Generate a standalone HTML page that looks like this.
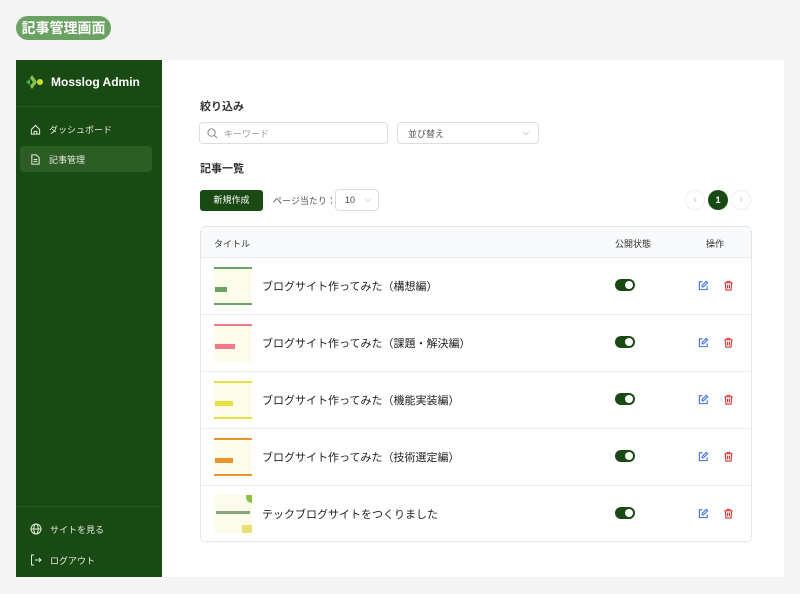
<!DOCTYPE html>
<html><head><meta charset="utf-8"><style>
*{box-sizing:border-box;margin:0;padding:0}
body{width:800px;height:594px;background:#f4f4f4;font-family:"Liberation Sans","Noto Sans CJK JP",sans-serif;position:relative;overflow:hidden;color:#222}
.badge{position:absolute;left:16px;top:16px;width:95px;height:24px;border-radius:12px;background:#6aa262;color:#fff;font-weight:bold;font-size:14px;line-height:24px;text-align:center}
.side{position:absolute;left:16px;top:60px;width:146px;height:517px;background:#1a4a14}
.main{position:absolute;left:162px;top:60px;width:622px;height:517px;background:#fff}
.logo{position:absolute;left:10px;top:14px;color:#fff;font-weight:bold;font-size:12px;display:flex;align-items:center;gap:7px}
.sep{position:absolute;left:0;right:0;height:1px;background:#2a5a22}
.nav{position:absolute;left:4px;width:132px;height:26px;border-radius:4px;color:#e4ecdf;font-size:9px;display:flex;align-items:center;padding-left:10px;gap:8px}
.abs{position:absolute}
.h{font-size:11px;font-weight:bold;color:#333}
.input{border:1px solid #ddd;border-radius:4px;height:22px;font-size:9px;color:#999;display:flex;align-items:center}
.tbl{position:absolute;left:200px;top:226px;width:552px;height:316px;border:1px solid #e6e6e6;border-radius:5px;overflow:hidden;background:#fff}
.row{position:absolute;left:0;right:0;height:57px;border-top:1px solid #ececec}
.thumb{position:absolute;left:13px;top:9px;width:38px;height:38px;background:#fdfbea}
.ttl{position:absolute;left:61px;top:20px;font-size:11px;color:#222}
.tog{position:absolute;left:414px;top:21px;width:20px;height:12px;border-radius:6px;background:#1a4a14}
.tog:after{content:"";position:absolute;right:2px;top:2px;width:8px;height:8px;border-radius:50%;background:#fff}
.ed{position:absolute;left:497px;top:22px}
.dl{position:absolute;left:522px;top:22px}
</style></head><body>
<div class="badge">記事管理画面</div>
<div class="side">
 <div class="logo"><svg width="18" height="16" viewBox="0 0 18 16"><path d="M6 1l5 7-5 7-2-3 3-4-3-4z" fill="#8bc34a"/><path d="M0 8l4-3 0 6z" fill="#4caf50"/><circle cx="14" cy="8" r="3" fill="#cddc39"/></svg>Mosslog Admin</div>
 <div class="sep" style="top:46px"></div>
 <div class="nav" style="top:56px"><svg width="11" height="11" viewBox="0 0 12 12" fill="none" stroke="#e4ecdf" stroke-width="1.1"><path d="M1.5 6L6 1.5 10.5 6V11h-9z"/><path d="M4.5 11V8h3v3"/></svg>ダッシュボード</div>
 <div class="nav" style="top:86px;background:#2c5d25"><svg width="11" height="11" viewBox="0 0 12 12" fill="none" stroke="#e4ecdf" stroke-width="1.1"><path d="M2 1h5l3 3v7H2z"/><path d="M4 6h4M4 8h4"/></svg>記事管理</div>
 <div class="sep" style="top:446px"></div>
 <div class="nav" style="top:456px"><svg width="12" height="12" viewBox="0 0 12 12" fill="none" stroke="#e4ecdf" stroke-width="1"><circle cx="6" cy="6" r="5"/><ellipse cx="6" cy="6" rx="2.2" ry="5"/><path d="M1 6h10"/></svg>サイトを見る</div>
 <div class="nav" style="top:487px"><svg width="12" height="12" viewBox="0 0 12 12" fill="none" stroke="#e4ecdf" stroke-width="1"><path d="M4 1H1.5v10H4M5 6h6M9 4l2 2-2 2"/></svg>ログアウト</div>
</div>
<div class="main"></div>
<div class="abs h" style="left:200px;top:98px">絞り込み</div>
<div class="abs input" style="left:199px;top:122px;width:189px;padding-left:7px;gap:6px"><svg width="11" height="11" viewBox="0 0 12 12" fill="none" stroke="#888" stroke-width="1.1"><circle cx="5" cy="5" r="4"/><path d="M8 8l3 3"/></svg>キーワード</div>
<div class="abs input" style="left:397px;top:122px;width:142px;padding-left:10px;color:#555">並び替え<span style="position:absolute;right:9px;top:5px;font-size:8px;color:#888">⌵</span></div>
<div class="abs h" style="left:200px;top:160px">記事一覧</div>
<div class="abs" style="left:200px;top:190px;width:63px;height:21px;background:#1a4a14;border-radius:3px;color:#fff;font-size:9px;text-align:center;line-height:21px">新規作成</div>
<div class="abs" style="left:273px;top:194px;font-size:9px;color:#555">ページ当たり：</div>
<div class="abs input" style="left:335px;top:189px;width:44px;padding-left:9px;color:#444">10<span style="position:absolute;right:7px;top:5px;font-size:8px;color:#999">⌵</span></div>
<div class="abs" style="left:685px;top:190px;width:20px;height:20px;border:1px solid #eee;border-radius:50%;color:#bbb;font-size:10px;text-align:center;line-height:18px">‹</div>
<div class="abs" style="left:708px;top:190px;width:20px;height:20px;background:#1a4a14;border-radius:50%;color:#fff;font-size:9px;font-weight:bold;text-align:center;line-height:20px">1</div>
<div class="abs" style="left:731px;top:190px;width:20px;height:20px;border:1px solid #eee;border-radius:50%;color:#bbb;font-size:10px;text-align:center;line-height:18px">›</div>
<div class="tbl">
 <div style="position:absolute;left:0;right:0;top:0;height:30px;background:#f8f9fa;font-size:9px;color:#333">
  <span class="abs" style="left:13px;top:10px">タイトル</span>
  <span class="abs" style="left:414px;top:10px">公開状態</span>
  <span class="abs" style="left:505px;top:10px">操作</span>
 </div>
 <div class="row" style="top:30px"><div class="thumb" style="border-top:2px solid #6aa262;border-bottom:2px solid #6aa262"><div class="abs" style="left:1px;top:18px;width:12px;height:5px;background:#6aa262"></div></div><div class="ttl">ブログサイト作ってみた（構想編）</div><div class="tog"></div>
 <svg class="ed" width="11" height="11" viewBox="0 0 12 12" fill="none" stroke="#3b6fe0" stroke-width="1.2"><path d="M5 2H1.5v8.5H10V7"/><path d="M9 1.5l1.5 1.5L6 7.5H4.5V6z"/></svg>
 <svg class="dl" width="11" height="11" viewBox="0 0 12 12" fill="none" stroke="#e03030" stroke-width="1.2"><path d="M1.5 3h9M4.5 3V1.5h3V3M2.5 3l.7 8h5.6l.7-8M5 5v4M7 5v4"/></svg></div>
 <div class="row" style="top:87px"><div class="thumb" style="border-top:2px solid #f07a8a"><div class="abs" style="left:1px;top:18px;width:20px;height:5px;background:#f07a8a"></div></div><div class="ttl">ブログサイト作ってみた（課題・解決編）</div><div class="tog"></div>
 <svg class="ed" width="11" height="11" viewBox="0 0 12 12" fill="none" stroke="#3b6fe0" stroke-width="1.2"><path d="M5 2H1.5v8.5H10V7"/><path d="M9 1.5l1.5 1.5L6 7.5H4.5V6z"/></svg>
 <svg class="dl" width="11" height="11" viewBox="0 0 12 12" fill="none" stroke="#e03030" stroke-width="1.2"><path d="M1.5 3h9M4.5 3V1.5h3V3M2.5 3l.7 8h5.6l.7-8M5 5v4M7 5v4"/></svg></div>
 <div class="row" style="top:144px"><div class="thumb" style="border-top:2px solid #e8e040;border-bottom:2px solid #e8e040"><div class="abs" style="left:1px;top:18px;width:18px;height:5px;background:#e8e040"></div></div><div class="ttl">ブログサイト作ってみた（機能実装編）</div><div class="tog"></div>
 <svg class="ed" width="11" height="11" viewBox="0 0 12 12" fill="none" stroke="#3b6fe0" stroke-width="1.2"><path d="M5 2H1.5v8.5H10V7"/><path d="M9 1.5l1.5 1.5L6 7.5H4.5V6z"/></svg>
 <svg class="dl" width="11" height="11" viewBox="0 0 12 12" fill="none" stroke="#e03030" stroke-width="1.2"><path d="M1.5 3h9M4.5 3V1.5h3V3M2.5 3l.7 8h5.6l.7-8M5 5v4M7 5v4"/></svg></div>
 <div class="row" style="top:201px"><div class="thumb" style="border-top:2px solid #e8962a;border-bottom:2px solid #e8962a"><div class="abs" style="left:1px;top:18px;width:18px;height:5px;background:#e8962a"></div></div><div class="ttl">ブログサイト作ってみた（技術選定編）</div><div class="tog"></div>
 <svg class="ed" width="11" height="11" viewBox="0 0 12 12" fill="none" stroke="#3b6fe0" stroke-width="1.2"><path d="M5 2H1.5v8.5H10V7"/><path d="M9 1.5l1.5 1.5L6 7.5H4.5V6z"/></svg>
 <svg class="dl" width="11" height="11" viewBox="0 0 12 12" fill="none" stroke="#e03030" stroke-width="1.2"><path d="M1.5 3h9M4.5 3V1.5h3V3M2.5 3l.7 8h5.6l.7-8M5 5v4M7 5v4"/></svg></div>
 <div class="row" style="top:258px"><div class="thumb"><div class="abs" style="left:2px;top:16px;width:34px;height:3px;background:#3a6a30;opacity:.6"></div><div class="abs" style="right:0;top:0;width:6px;height:8px;background:#8bc34a;border-radius:0 0 0 6px"></div><div class="abs" style="right:0;bottom:0;width:10px;height:8px;background:#e8e070"></div></div><div class="ttl">テックブログサイトをつくりました</div><div class="tog"></div>
 <svg class="ed" width="11" height="11" viewBox="0 0 12 12" fill="none" stroke="#3b6fe0" stroke-width="1.2"><path d="M5 2H1.5v8.5H10V7"/><path d="M9 1.5l1.5 1.5L6 7.5H4.5V6z"/></svg>
 <svg class="dl" width="11" height="11" viewBox="0 0 12 12" fill="none" stroke="#e03030" stroke-width="1.2"><path d="M1.5 3h9M4.5 3V1.5h3V3M2.5 3l.7 8h5.6l.7-8M5 5v4M7 5v4"/></svg></div>
</div>
</body></html>
